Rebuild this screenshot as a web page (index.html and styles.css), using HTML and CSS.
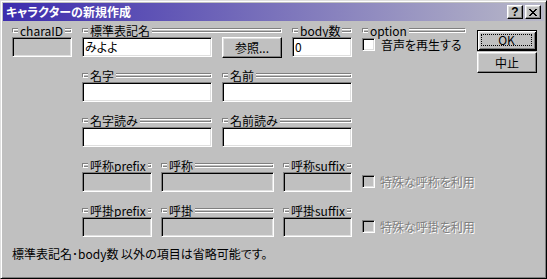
FILE: index.html
```html
<!DOCTYPE html>
<html lang="ja">
<head>
<meta charset="utf-8">
<title>キャラクターの新規作成</title>
<link rel="stylesheet" href="styles.css">
</head>
<body>
<div class="window">
  <div class="titlebar">
    <span class="title">キャラクターの新規作成</span>
    <div class="tbtns">
      <span class="tbtn help">?</span>
      <span class="tbtn"><svg width="8" height="7" viewBox="0 0 8 7"><path d="M0 0h2v1H0zM6 0h2v1H6zM1 1h2v1H1zM5 1h2v1H5zM2 2h4v1H2zM3 3h2v1H3zM2 4h4v1H2zM1 5h2v1H1zM5 5h2v1H5zM0 6h2v1H0zM6 6h2v1H6z" fill="#000"/></svg></span>
    </div>
  </div>
  <div class="client">
    <div class="top">
      <div class="form">
        <div class="row">
          <div class="grp w60">
            <div class="gh"><span class="sl"></span><span class="gl">charaID</span><span class="sr"></span></div>
            <div class="edit dis"></div>
          </div>
          <div class="grp w200">
            <div class="gh"><span class="sl"></span><span class="gl">標準表記名</span><span class="sr"></span></div>
            <div class="pair">
              <div class="edit w130">みよよ</div>
              <div class="btn w60">参照...</div>
            </div>
          </div>
          <div class="grp w60">
            <div class="gh"><span class="sl"></span><span class="gl">body数</span><span class="sr"></span></div>
            <div class="edit">0</div>
          </div>
          <div class="grp w104">
            <div class="gh"><span class="sl"></span><span class="gl">option</span><span class="sr"></span></div>
            <div class="chk"><span class="box"></span>音声を再生する</div>
          </div>
        </div>
        <div class="row ind">
          <div class="grp w130">
            <div class="gh"><span class="sl"></span><span class="gl">名字</span><span class="sr"></span></div>
            <div class="edit"></div>
          </div>
          <div class="grp w130">
            <div class="gh"><span class="sl"></span><span class="gl">名前</span><span class="sr"></span></div>
            <div class="edit"></div>
          </div>
        </div>
        <div class="row ind">
          <div class="grp w130">
            <div class="gh"><span class="sl"></span><span class="gl">名字読み</span><span class="sr"></span></div>
            <div class="edit"></div>
          </div>
          <div class="grp w130">
            <div class="gh"><span class="sl"></span><span class="gl">名前読み</span><span class="sr"></span></div>
            <div class="edit"></div>
          </div>
        </div>
        <div class="row ind tight">
          <div class="grp w70">
            <div class="gh"><span class="sl"></span><span class="gl">呼称prefix</span><span class="sr"></span></div>
            <div class="edit dis"></div>
          </div>
          <div class="grp w113">
            <div class="gh"><span class="sl"></span><span class="gl">呼称</span><span class="sr"></span></div>
            <div class="edit dis"></div>
          </div>
          <div class="grp w69">
            <div class="gh"><span class="sl"></span><span class="gl">呼称suffix</span><span class="sr"></span></div>
            <div class="edit dis"></div>
          </div>
          <div class="chkcell">
            <div class="chk dis"><span class="box"></span>特殊な呼称を利用</div>
          </div>
        </div>
        <div class="row ind tight">
          <div class="grp w70">
            <div class="gh"><span class="sl"></span><span class="gl">呼掛prefix</span><span class="sr"></span></div>
            <div class="edit dis"></div>
          </div>
          <div class="grp w113">
            <div class="gh"><span class="sl"></span><span class="gl">呼掛</span><span class="sr"></span></div>
            <div class="edit dis"></div>
          </div>
          <div class="grp w69">
            <div class="gh"><span class="sl"></span><span class="gl">呼掛suffix</span><span class="sr"></span></div>
            <div class="edit dis"></div>
          </div>
          <div class="chkcell">
            <div class="chk dis"><span class="box"></span>特殊な呼掛を利用</div>
          </div>
        </div>
      </div>
      <div class="side">
        <div class="btn def"><span class="focus">OK</span></div>
        <div class="btn">中止</div>
      </div>
    </div>
    <div class="note">標準表記名･body数 以外の項目は省略可能です。</div>
  </div>
</div>
</body>
</html>
```
FILE: styles.css
```css
* { box-sizing: border-box; }
html, body { margin: 0; padding: 0; }
body {
  width: 547px;
  height: 279px;
  overflow: hidden;
  background: #c0c0c0;
  font-family: "Noto Sans CJK JP", "Noto Sans", sans-serif;
  font-size: 12px;
  font-feature-settings: "palt";
  color: #000;
}
.window {
  width: 547px;
  height: 279px;
  border: 1px solid;
  border-color: #dfdfdf #000 #000 #dfdfdf;
  box-shadow: inset 1px 1px 0 #fff, inset -1px -1px 0 #808080;
  padding: 2px;
  display: flex;
  flex-direction: column;
  background: #c0c0c0;
}
.titlebar {
  height: 18px;
  flex: none;
  background: linear-gradient(90deg, #3c2cae 0%, #b8b8c8 100%);
  display: flex;
  align-items: center;
  justify-content: space-between;
  padding: 0 3px 0 3px;
}
.title {
  color: #fff;
  font-weight: bold;
  line-height: 18px;
  white-space: nowrap;
}
.tbtns { display: flex; gap: 2px; }
.tbtn {
  width: 16px;
  height: 14px;
  background: #c0c0c0;
  border: 1px solid;
  border-color: #fff #000 #000 #fff;
  box-shadow: inset -1px -1px 0 #808080, inset 1px 1px 0 #dfdfdf;
  display: flex;
  align-items: center;
  justify-content: center;
}
.help {
  font-family: "Liberation Sans", sans-serif;
  font-weight: bold;
  font-size: 12px;
  line-height: 12px;
}
.client { flex: 1; padding: 3px 0 0 9px; }
.top { display: flex; gap: 11px; }
.form { width: 454px; display: flex; flex-direction: column; gap: 12px; }
.row { display: flex; height: 33px; gap: 10px; }
.row.tight { gap: 9px; }
.ind { margin-left: 70px; }
.grp { display: flex; flex-direction: column; flex: none; }
.gh { height: 13px; display: flex; align-items: center; }
.sl, .sr {
  height: 5px;
  border: 1px solid;
  border-color: #808080 #fff #fff #808080;
}
.sl {
  width: 6px;
  flex: none;
  border-right: 0;
  box-shadow: inset 1px 1px 0 #fff, inset 0 -1px 0 #808080;
}
.sr {
  flex: 1;
  min-width: 4px;
  border-left: 0;
  box-shadow: inset 0 1px 0 #fff, inset -1px -1px 0 #808080;
}
.gl { padding: 0 2px; line-height: 13px; white-space: nowrap; }
.edit {
  height: 20px;
  border: 1px solid;
  border-color: #808080 #fff #fff #808080;
  box-shadow: inset 1px 1px 0 #000, inset -1px -1px 0 #dfdfdf;
  background: #fff;
  padding: 1px 0 0 2px;
  line-height: 16px;
  white-space: nowrap;
}
.edit.dis { background: #c0c0c0; }
.pair { display: flex; gap: 10px; }
.btn {
  height: 21px;
  background: #c0c0c0;
  border: 1px solid;
  border-color: #fff #000 #000 #fff;
  box-shadow: inset -1px -1px 0 #808080, inset 1px 1px 0 #dfdfdf;
  display: flex;
  align-items: center;
  justify-content: center;
  line-height: 14px;
  white-space: nowrap;
}
.btn.def {
  border-color: #000;
  box-shadow: inset 1px 1px 0 #fff, inset -1px -1px 0 #000, inset 2px 2px 0 #dfdfdf, inset -2px -2px 0 #808080;
  padding: 3px 4px 4px 3px;
  align-items: stretch;
}
.focus {
  flex: 1;
  border: 1px dotted #000;
  display: flex;
  align-items: center;
  justify-content: center;
}
.chk {
  display: flex;
  align-items: center;
  gap: 6px;
  margin-top: 1px;
  height: 13px;
  white-space: nowrap;
  line-height: 13px;
}
.box {
  width: 13px;
  height: 13px;
  flex: none;
  border: 1px solid;
  border-color: #808080 #fff #fff #808080;
  box-shadow: inset 1px 1px 0 #000, inset -1px -1px 0 #dfdfdf;
  background: #fff;
}
.chkcell { padding-top: 15px; margin-left: 1px; }
.chk.dis { color: #808080; text-shadow: 1px 1px 0 #fff; gap: 5px; }
.chk.dis .box { background: #c0c0c0; }
.side { width: 60px; display: flex; flex-direction: column; gap: 1px; padding-top: 6px; }
.note { margin-top: 10px; line-height: 14px; white-space: nowrap; }
.w60 { width: 60px; }
.w69 { width: 69px; }
.w70 { width: 70px; }
.w104 { width: 104px; }
.w113 { width: 113px; }
.w130 { width: 130px; }
.w200 { width: 200px; }
```
